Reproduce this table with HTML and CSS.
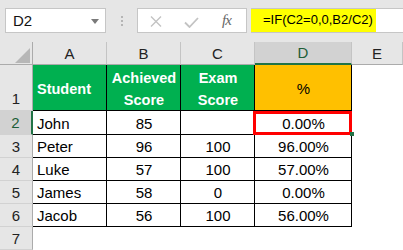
FILE: index.html
```html
<!DOCTYPE html>
<html lang="en">
<head>
    <meta charset="UTF-8">
    <meta name="viewport" content="width=device-width, initial-scale=1.0">
    <title>Exam Scores</title>
    <link rel="stylesheet" href="styles.css">
</head>
<body>
    <div class="formula-bar">
        <div class="name-box">
            <span>D2</span>
            <svg class="caret" width="8" height="5" viewBox="0 0 8 5"><path d="M0 0h8L4 5z" fill="#7a7a7a"/></svg>
        </div>
        <div class="grip"><i></i><i></i><i></i></div>
        <div class="fx-buttons">
            <svg class="btn-cancel" width="12" height="11" viewBox="0 0 12 11"><path d="M1 0.5l10 10M11 0.5l-10 10" stroke="#c3c3c3" stroke-width="1.4" fill="none"/></svg>
            <svg class="btn-enter" width="15" height="11" viewBox="0 0 15 11"><path d="M1 5.5l4.5 4.5L14 1" stroke="#c3c3c3" stroke-width="1.8" fill="none"/></svg>
            <span class="fx">fx</span>
        </div>
        <div class="formula-input">
            <span class="formula">=IF(C2=0,0,B2/C2)</span>
        </div>
    </div>

    <div class="sheet">
        <div class="corner"><div class="corner-mark"></div></div>
        <div class="col-head">A</div>
        <div class="col-head">B</div>
        <div class="col-head">C</div>
        <div class="col-head selected">D</div>
        <div class="col-head">E</div>

        <div class="row-head first">1</div>
        <div class="cell head">Student</div>
        <div class="cell head center">Achieved<br>Score</div>
        <div class="cell head center">Exam<br>Score</div>
        <div class="cell head pct center">%</div>
        <div class="cell blank"></div>

        <div class="row-head selected">2</div>
        <div class="cell">John</div>
        <div class="cell center">85</div>
        <div class="cell center"></div>
        <div class="cell center active">0.00%</div>
        <div class="cell blank"></div>

        <div class="row-head">3</div>
        <div class="cell">Peter</div>
        <div class="cell center">96</div>
        <div class="cell center">100</div>
        <div class="cell center">96.00%</div>
        <div class="cell blank"></div>

        <div class="row-head">4</div>
        <div class="cell">Luke</div>
        <div class="cell center">57</div>
        <div class="cell center">100</div>
        <div class="cell center">57.00%</div>
        <div class="cell blank"></div>

        <div class="row-head">5</div>
        <div class="cell">James</div>
        <div class="cell center">58</div>
        <div class="cell center">0</div>
        <div class="cell center">0.00%</div>
        <div class="cell blank"></div>

        <div class="row-head">6</div>
        <div class="cell">Jacob</div>
        <div class="cell center">56</div>
        <div class="cell center">100</div>
        <div class="cell center">56.00%</div>
        <div class="cell blank"></div>

        <div class="row-head">7</div>
        <div class="cell blank"></div>
        <div class="cell blank"></div>
        <div class="cell blank"></div>
        <div class="cell blank"></div>
        <div class="cell blank"></div>
    </div>
</body>
</html>
```

FILE: styles.css
```css
* {
    box-sizing: border-box;
}

body {
    margin: 0;
    width: 403px;
    height: 250px;
    overflow: hidden;
    background-color: #fff;
    font-family: "Liberation Sans", Arial, sans-serif;
    font-size: 15px;
    color: #000;
}

/* formula bar */
.formula-bar {
    height: 42px;
    background-color: #e6e6e6;
    display: flex;
    align-items: flex-start;
    padding-top: 8px;
}

.name-box {
    margin-left: 5px;
    width: 101px;
    height: 25px;
    background-color: #fff;
    border: 1px solid #c6c6c6;
    display: flex;
    align-items: center;
    justify-content: space-between;
    padding: 0 6px 0 7px;
    font-size: 15px;
    color: #111;
}

.name-box .caret {
    margin-top: 1px;
}

.grip {
    width: 31px;
    display: flex;
    flex-direction: column;
    align-items: center;
    gap: 2px;
    padding-top: 8px;
}

.grip i {
    display: block;
    width: 2px;
    height: 2px;
    background-color: #b5b5b5;
}

.fx-buttons {
    width: 110px;
    height: 25px;
    background-color: #fff;
    border: 1px solid #c6c6c6;
    display: flex;
    align-items: center;
    padding-left: 12px;
}

.btn-cancel {
    margin-top: 2px;
}

.btn-enter {
    margin-left: 22px;
    margin-top: 4px;
}

.fx {
    margin-left: 23px;
    font-family: "Liberation Serif", "Times New Roman", serif;
    font-style: italic;
    font-size: 15px;
    color: #666;
    letter-spacing: -1px;
}

.formula-input {
    flex: 1;
    margin-left: 4px;
    height: 25px;
    background-color: #fff;
    border-top: 1px solid #c6c6c6;
    border-bottom: 1px solid #c6c6c6;
    display: flex;
}

.formula {
    width: 125px;
    background-color: #ffff00;
    padding: 3px 0 0 12px;
    font-size: 13px;
    white-space: nowrap;
}

/* worksheet grid */
.sheet {
    display: grid;
    grid-template-columns: 33px 74px 74px 74px 97px 1fr;
    grid-template-rows: 23px 46px 24px repeat(5, 23px);
}

.corner {
    background-color: #e6e6e6;
    border-right: 1px solid #ababab;
    border-bottom: 1px solid #ababab;
    display: flex;
    justify-content: flex-end;
    align-items: flex-end;
    padding: 0 2px 1px 0;
}

.corner-mark {
    width: 15px;
    height: 15px;
    background-color: #b7b7b7;
    clip-path: polygon(100% 0, 100% 100%, 0 100%);
}

.col-head {
    background-color: #e6e6e6;
    border-right: 1px solid #c4c4c4;
    border-bottom: 1px solid #ababab;
    display: flex;
    align-items: center;
    justify-content: center;
    color: #222;
}

.col-head.selected {
    background-color: #d2d2d2;
    border-bottom: 2px solid #217346;
    color: #1d5e38;
}

.row-head {
    background-color: #e6e6e6;
    border-right: 1px solid #ababab;
    border-bottom: 1px solid #d2d2d2;
    display: flex;
    align-items: center;
    justify-content: center;
    color: #222;
}

.row-head.first {
    align-items: flex-end;
    padding-bottom: 3px;
}

.row-head.selected {
    background-color: #d2d2d2;
    border-right: 2px solid #217346;
    color: #1d5e38;
}

.cell {
    border-right: 1px solid #000;
    border-bottom: 1px solid #000;
    display: flex;
    align-items: center;
    padding: 1px 3px 0 4px;
    white-space: nowrap;
}

.cell.center {
    justify-content: center;
    text-align: center;
}

.cell.head {
    background-color: #00b050;
    color: #fff;
    font-weight: bold;
    font-size: 14.5px;
    line-height: 22px;
    padding-top: 3px;
}

.cell.head.pct {
    background-color: #ffc000;
    color: #000;
    font-weight: normal;
    font-size: 15px;
}

.cell.blank {
    border: none;
}

/* selected cell frame with fill handle */
.cell.active {
    position: relative;
}

.cell.active::after {
    content: "";
    position: absolute;
    left: -2px;
    right: -1px;
    top: 0;
    bottom: -1px;
    border: 3px solid #f00;
}

.cell.active::before {
    content: "";
    position: absolute;
    right: -3px;
    bottom: -2px;
    width: 4px;
    height: 4px;
    background-color: #217346;
    z-index: 1;
}
```
